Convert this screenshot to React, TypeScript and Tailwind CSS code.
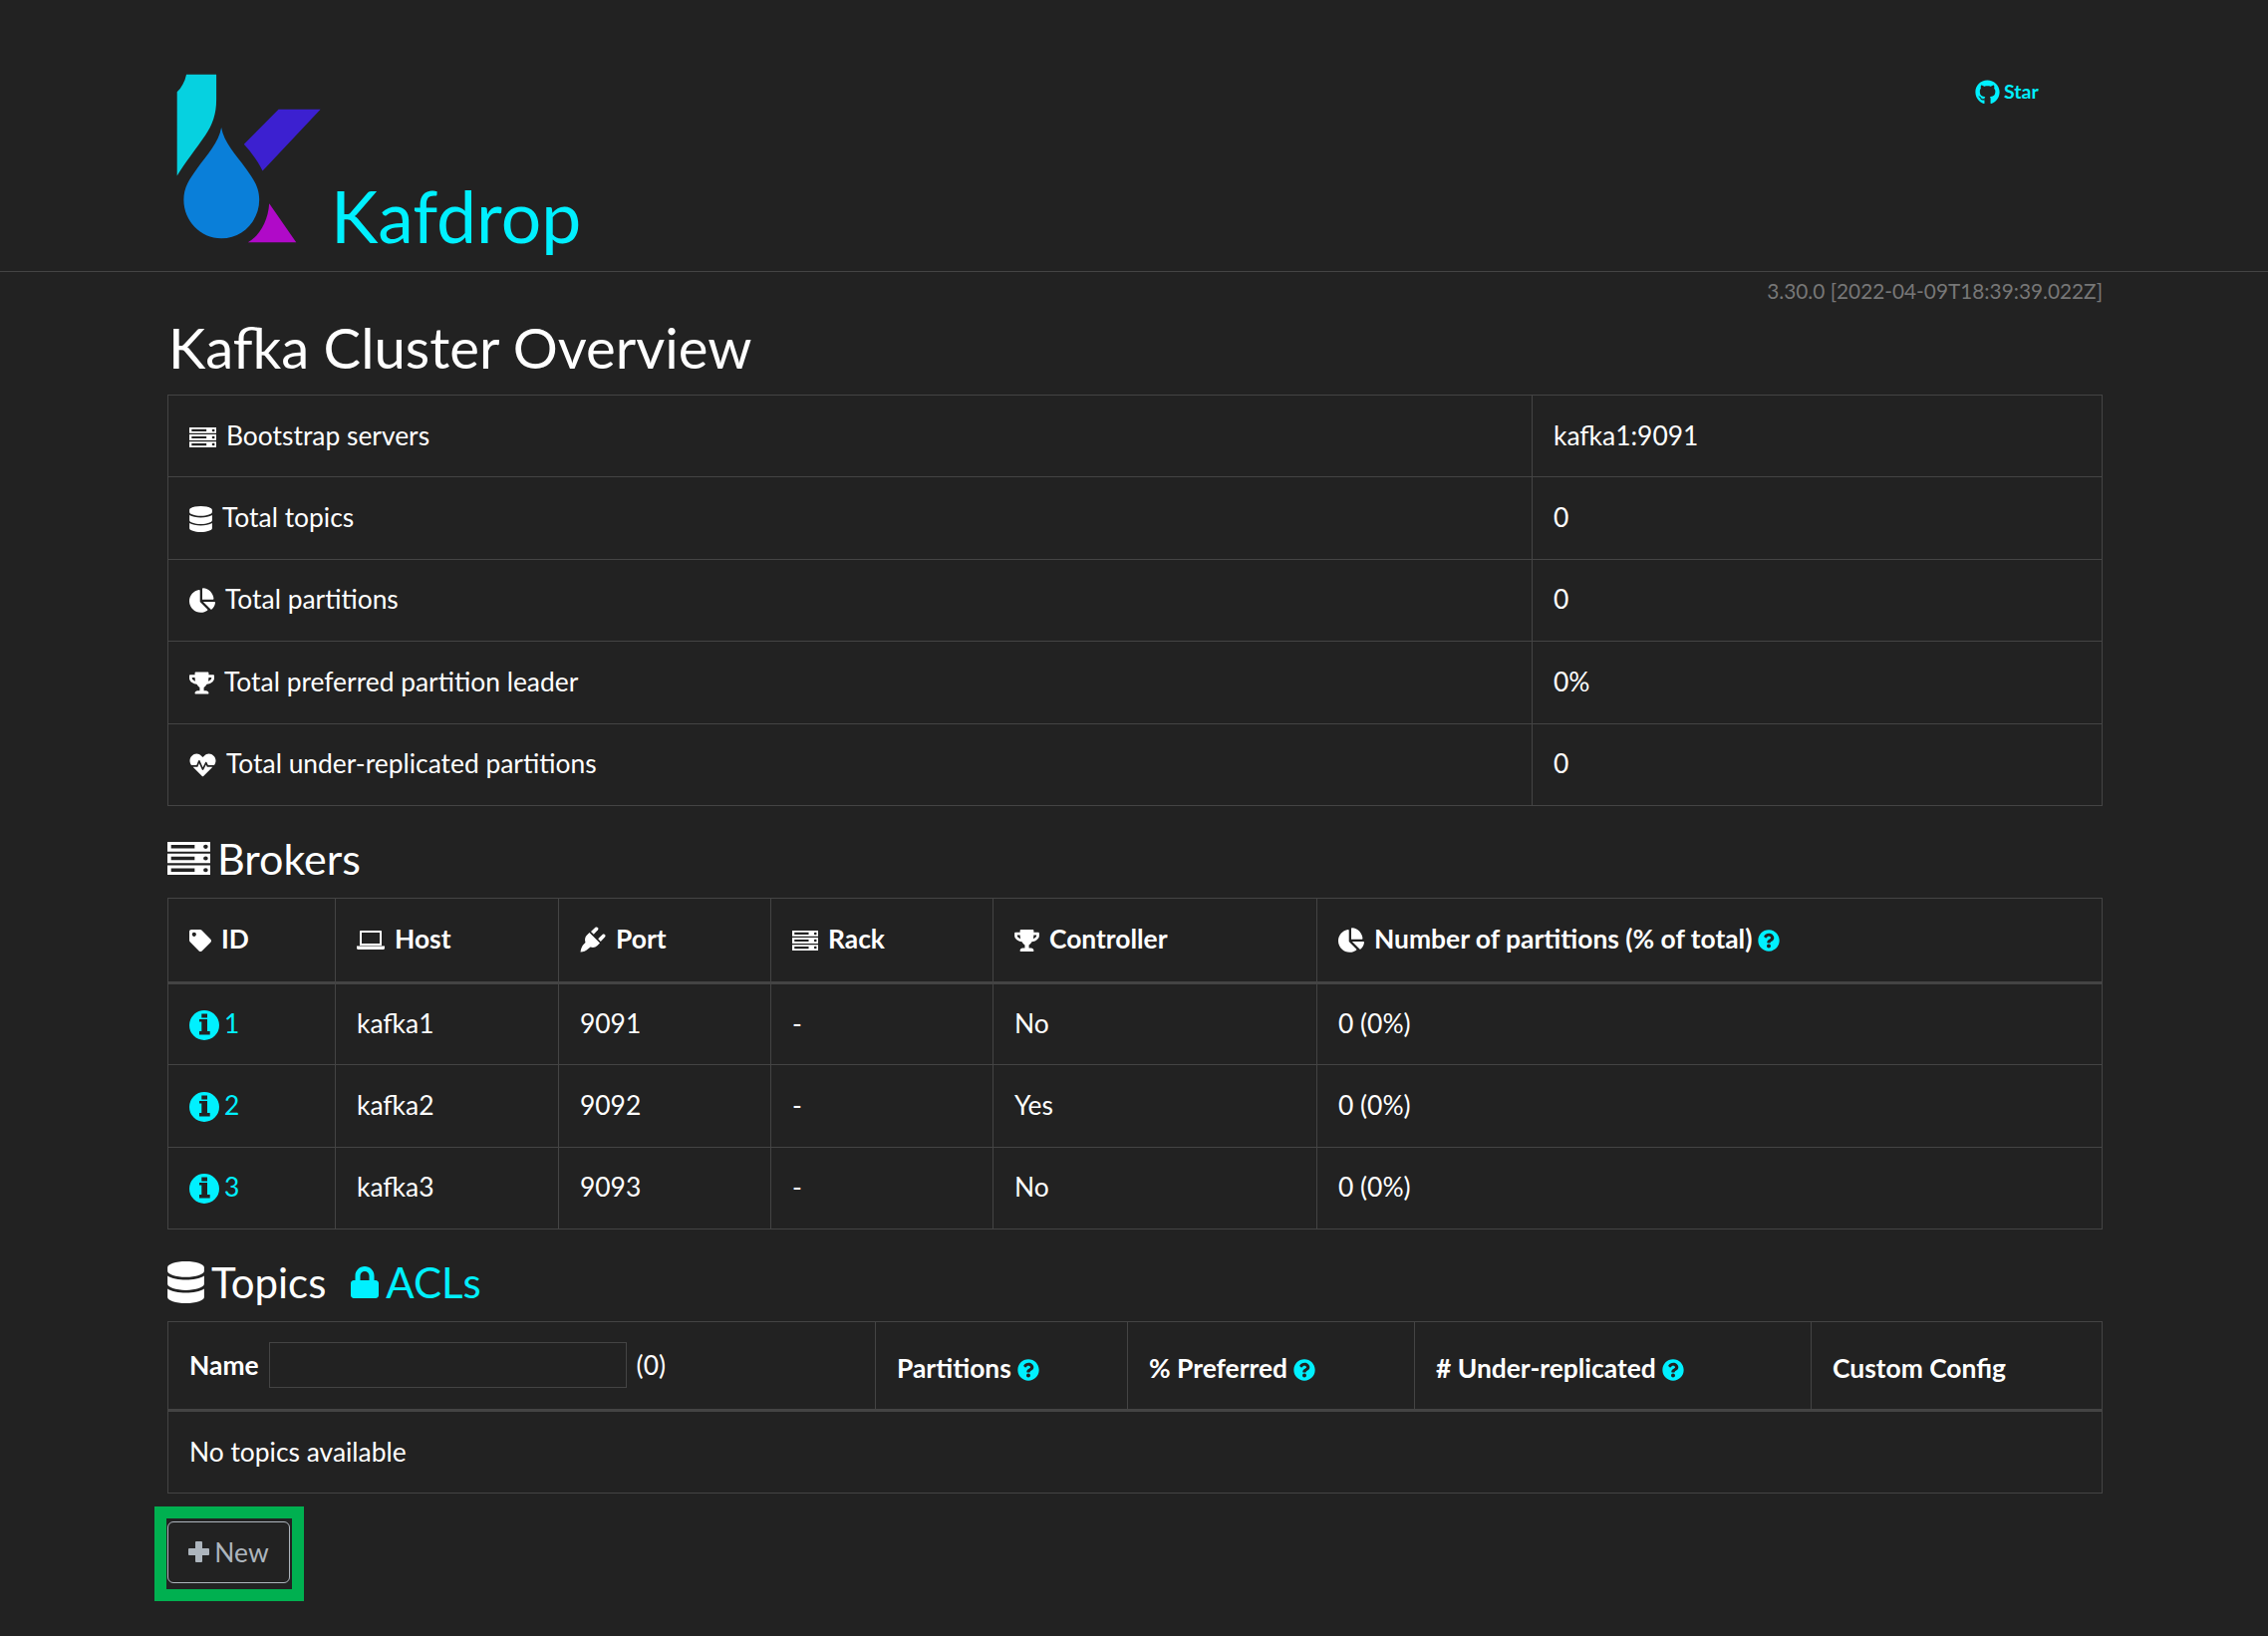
import { FaChartPie, FaDatabase, FaGithub, FaHeartbeat, FaLock, FaQuestionCircle, FaTag, FaTrophy } from 'react-icons/fa'

const ServerIcon = ({ className }: { className?: string }) => (
  <svg viewBox="0 0 28 24" preserveAspectRatio="none" className={className} fill="currentColor" fillRule="evenodd">
    <path d="M0 0h28v7H0zM2.4 2.2v2.6h15.4V2.2zM25 2a1.5 1.5 0 1 0 0 3a1.5 1.5 0 1 0 0-3z" />
    <path d="M0 8.5h28v7H0zM2.4 10.7v2.6h15.4v-2.6zM25 10.5a1.5 1.5 0 1 0 0 3a1.5 1.5 0 1 0 0-3z" />
    <path d="M0 17h28v7H0zM2.4 19.2v2.6h15.4v-2.6zM25 19a1.5 1.5 0 1 0 0 3a1.5 1.5 0 1 0 0-3z" />
  </svg>
)

const PlugIcon = ({ className }: { className?: string }) => (
  <svg viewBox="0 0 26 26" className={className} fill="currentColor">
    <path d="M0.5 25.5C1 22 2 19.5 4 17.5L5.5 16C4.5 13 5 10.5 7 8.5L9.5 6L20 16.5L17.5 19C15.5 21 13 21.5 10.5 20.5L8 22.5C6 24.5 3.5 25.5 0.5 25.5Z" />
    <path d="M11 5L15.5 0.8C17 -0.5 19.5 1.5 18 3.2L13.8 7.8Z" />
    <path d="M18.2 12.2L22.8 7.8C24.5 6.4 26.5 8.8 25 10.4L20.8 15Z" />
  </svg>
)

const PlusIcon = ({ className }: { className?: string }) => (
  <svg viewBox="0 0 21 21" className={className} fill="currentColor">
    <path d="M8 0H13C13.5 0 14 .5 14 1V7H20C20.5 7 21 7.5 21 8V13C21 13.5 20.5 14 20 14H14V20C14 20.5 13.5 21 13 21H8C7.5 21 7 20.5 7 20V14H1C.5 14 0 13.5 0 13V8C0 7.5 .5 7 1 7H7V1C7 .5 7.5 0 8 0Z" />
  </svg>
)

const LaptopIcon = ({ className }: { className?: string }) => (
  <svg viewBox="0 0 28 19" className={className} fill="currentColor" fillRule="evenodd">
    <path d="M4 0H24C24.6 0 25 .4 25 1V15H3V1C3 .4 3.4 0 4 0ZM5 2V13H23V2Z" />
    <path d="M0 15.5H28V17.5C28 18.4 27.4 19 26.5 19H1.5C.6 19 0 18.4 0 17.5Z" />
  </svg>
)

const InfoIcon = ({ className }: { className?: string }) => (
  <svg viewBox="0 0 30 30" className={className} fill="currentColor" fillRule="evenodd">
    <path d="M15 0a15 15 0 1 0 0 30a15 15 0 1 0 0-30zM12.3 3.5V7.6H18V3.5zM10 9V11.5H12.3V21H10V24.5H20.7V21H18V9z" />
  </svg>
)

const Logo = () => (
  <svg viewBox="110 70 440 515" className="h-[172px] w-[147px] shrink-0">
    <path d="M143 75H233V150C233 195 222 225 200 258C175 295 135 345 115 380V128C128 115 138 98 143 75Z" fill="#06d1e0" />
    <path d="M248 235C256 280 290 315 322 358C345 390 362 415 362 452C362 515 312 568 248 568C185 568 135 515 135 452C135 415 152 390 175 358C207 315 240 280 248 235Z" fill="#0a7fd9" />
    <path d="M420 180H546L372 365C358 335 338 310 316 285Z" fill="#3c20d0" />
    <path d="M392 463L473 580H328C365 558 388 515 392 463Z" fill="#b00ac8" />
  </svg>
)

const rows = [
  { icon: <ServerIcon className="mr-[10px] inline h-[20px] w-[27px] align-[-2px]" />, label: 'Bootstrap servers', value: 'kafka1:9091' },
  { icon: <FaDatabase className="mr-[10px] inline h-[26px] w-[23px] align-[-5px]" />, label: 'Total topics', value: '0' },
  { icon: <FaChartPie className="mr-[10px] inline h-[25px] w-[26px] align-[-4px]" />, label: 'Total partitions', value: '0' },
  { icon: <FaTrophy className="mr-[10px] inline h-[23px] w-[25px] align-[-3px]" />, label: 'Total preferred partition leader', value: '0%' },
  { icon: <FaHeartbeat className="mr-[10px] inline h-[26px] w-[27px] align-[-5px]" />, label: 'Total under-replicated partitions', value: '0' },
]

const brokers = [
  { id: 1, host: 'kafka1', port: 9091, controller: 'No' },
  { id: 2, host: 'kafka2', port: 9092, controller: 'Yes' },
  { id: 3, host: 'kafka3', port: 9093, controller: 'No' },
]

const th = 'border border-[#444] border-b-[3px] px-[21px] pt-0 pb-[2px] text-left font-bold h-[85px]'
const td = 'border border-[#444] px-[21px] pt-0 pb-[2px] h-[82.4px]'
const topicTh = 'border border-[#444] border-b-[3px] px-[21px] pt-[4px] pb-0 text-left font-bold h-[89px]'

const Help = () => <FaQuestionCircle className="ml-[6px] inline h-[22px] w-[22px] align-[-3px] text-[#00f0ff]" />

const App = () => {
  return (
    <div className="min-h-[1642px] bg-[#222] font-['Lato',sans-serif] text-[26.4px] leading-[36px] text-white">
      <div className="relative flex h-[273px] items-end border-b border-[#444] pl-[176px]">
        <div className="mb-[27px] flex items-end">
          <Logo />
          <span className="mb-[-13px] ml-[9px] text-[71.5px] leading-[84px] text-[#00f0ff]">Kafdrop</span>
        </div>
        <a className="absolute top-[78px] left-[1982px] flex items-center gap-[4px] text-[19.5px] leading-[28px] font-bold text-[#00f0ff]">
          <FaGithub className="h-[25px] w-[25px]" />
          Star
        </a>
      </div>

      <div className="ml-[168px] w-[1942px]">
        <div className="h-[34px] pt-[4px] text-right text-[20.8px] leading-[30px] text-[#777]">3.30.0 [2022-04-09T18:39:39.022Z]</div>
        <h1 className="mt-[6px] mb-[13px] pl-[1px] text-[56.3px] leading-[70px]">Kafka Cluster Overview</h1>

        <table className="w-full table-fixed border-collapse">
          <colgroup>
            <col className="w-[1369px]" />
            <col />
          </colgroup>
          <tbody>
            {rows.map((row) => (
              <tr key={row.label}>
                <td className={td}>
                  {row.icon}
                  {row.label}
                </td>
                <td className={td}>{row.value}</td>
              </tr>
            ))}
          </tbody>
        </table>

        <h3 className="mt-[29px] mb-[15px] flex items-center text-[43px] leading-[48px]">
          <ServerIcon className="mr-[7px] h-[33px] w-[43px]" />
          Brokers
        </h3>

        <table className="w-full table-fixed border-collapse">
          <colgroup>
            <col className="w-[168px]" />
            <col className="w-[224px]" />
            <col className="w-[213px]" />
            <col className="w-[223px]" />
            <col className="w-[325px]" />
            <col />
          </colgroup>
          <thead>
            <tr>
              <th className={th}><FaTag className="mr-[10px] inline h-[22px] w-[22px] align-[-3px]" />ID</th>
              <th className={th}><LaptopIcon className="mr-[10px] inline h-[19px] w-[28px] align-[-1px]" />Host</th>
              <th className={th}><PlugIcon className="mr-[10px] inline h-[26px] w-[26px] align-[-4px]" />Port</th>
              <th className={th}><ServerIcon className="mr-[10px] inline h-[20px] w-[26px] align-[-2px]" />Rack</th>
              <th className={th}><FaTrophy className="mr-[10px] inline h-[22px] w-[25px] align-[-3px]" />Controller</th>
              <th className={th}><FaChartPie className="mr-[10px] inline h-[25px] w-[26px] align-[-4px]" />Number of partitions (% of total)<Help /></th>
            </tr>
          </thead>
          <tbody>
            {brokers.map((broker) => (
              <tr key={broker.id}>
                <td className={td}>
                  <a className="text-[#00f0ff]"><InfoIcon className="mr-[5px] inline h-[30px] w-[30px] align-[-7px]" />{broker.id}</a>
                </td>
                <td className={td}>{broker.host}</td>
                <td className={td}>{broker.port}</td>
                <td className={td}>-</td>
                <td className={td}>{broker.controller}</td>
                <td className={td}>0 (0%)</td>
              </tr>
            ))}
          </tbody>
        </table>

        <h3 className="mt-[29px] mb-[15px] flex items-center text-[42px] leading-[48px]">
          <FaDatabase className="mr-[7px] h-[42px] w-[37px]" />
          Topics
          <a className="ml-[25px] flex items-center text-[#00f0ff]">
            <FaLock className="mr-[7px] h-[34px] w-[28px]" />
            ACLs
          </a>
        </h3>

        <table className="w-full table-fixed border-collapse">
          <colgroup>
            <col className="w-[710px]" />
            <col className="w-[253px]" />
            <col className="w-[288px]" />
            <col className="w-[398px]" />
            <col />
          </colgroup>
          <thead>
            <tr>
              <th className="h-[89px] border border-b-[3px] border-[#444] px-[21px] pt-0 pb-[2px] text-left font-bold">
                <div className="flex items-center">
                  Name
                  <input className="mx-[10px] h-[46px] w-[359px] border border-[#444] bg-transparent" />
                  <span className="font-normal">(0)</span>
                </div>
              </th>
              <th className={topicTh}>Partitions<Help /></th>
              <th className={topicTh}>% Preferred<Help /></th>
              <th className={topicTh}># Under-replicated<Help /></th>
              <th className={topicTh}>Custom Config</th>
            </tr>
          </thead>
          <tbody>
            <tr>
              <td className="h-[82.4px] border border-[#444] px-[21px] py-0" colSpan={5}>No topics available</td>
            </tr>
          </tbody>
        </table>

        <div className="mt-[13px] ml-[-13px] w-fit border-[12px] border-[#00b050] pt-[3px] pr-[2px] pb-[6px] pl-[1px]">
          <button className="flex h-[62px] w-[123px] items-center justify-center rounded-[6px] border border-[#adb5bd] text-[#adb5bd]">
            <PlusIcon className="mr-[5px] h-[21px] w-[21px]" />
            New
          </button>
        </div>
      </div>
    </div>
  )
}

export default App
